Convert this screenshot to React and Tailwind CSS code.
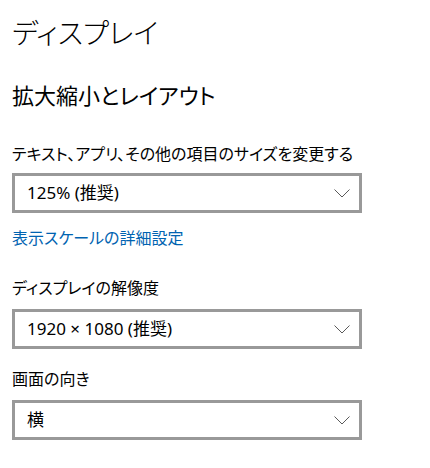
const font = {
  fontFamily: '"Noto Sans", "Noto Sans CJK JP", sans-serif',
  fontFeatureSettings: '"palt"',
};

function Chevron() {
  return (
    <svg width="16" height="9" viewBox="0 0 16 9" fill="none" aria-hidden="true">
      <polyline points="0.5,0.5 8,8 15.5,0.5" stroke="#5a5a5a" strokeWidth="1" />
    </svg>
  );
}

function Select({ value, className = "" }) {
  return (
    <button
      type="button"
      className={`flex h-[40px] w-[350px] items-center justify-between border-[3px] border-[#999999] bg-white pl-[12px] pr-[9px] text-left text-[17px] text-black ${className}`}
    >
      <span>{value}</span>
      <Chevron />
    </button>
  );
}

export default function App() {
  return (
    <main className="min-h-screen bg-white px-3 text-black" style={font}>
      <h1 className="pt-[13px] text-[28px] font-light leading-[40px]">ディスプレイ</h1>

      <h2 className="mt-[26px] text-[22px] font-normal leading-[32px]">拡大縮小とレイアウト</h2>

      <p className="mt-[33px] text-[16px] leading-[20px]">
        テキスト、アプリ、その他の項目のサイズを変更する
      </p>
      <Select value="125% (推奨)" className="mt-[9px]" />

      <a href="#" className="mt-[14px] block w-fit text-[16px] leading-[22px] text-[#0063b1]">
        表示スケールの詳細設定
      </a>

      <p className="mt-[29px] text-[16px] leading-[20px]">ディスプレイの解像度</p>
      <Select value="1920 × 1080 (推奨)" className="mt-[11px]" />

      <p className="mt-[20px] text-[16px] leading-[20px]">画面の向き</p>
      <Select value="横" className="mt-[11px]" />
    </main>
  );
}
